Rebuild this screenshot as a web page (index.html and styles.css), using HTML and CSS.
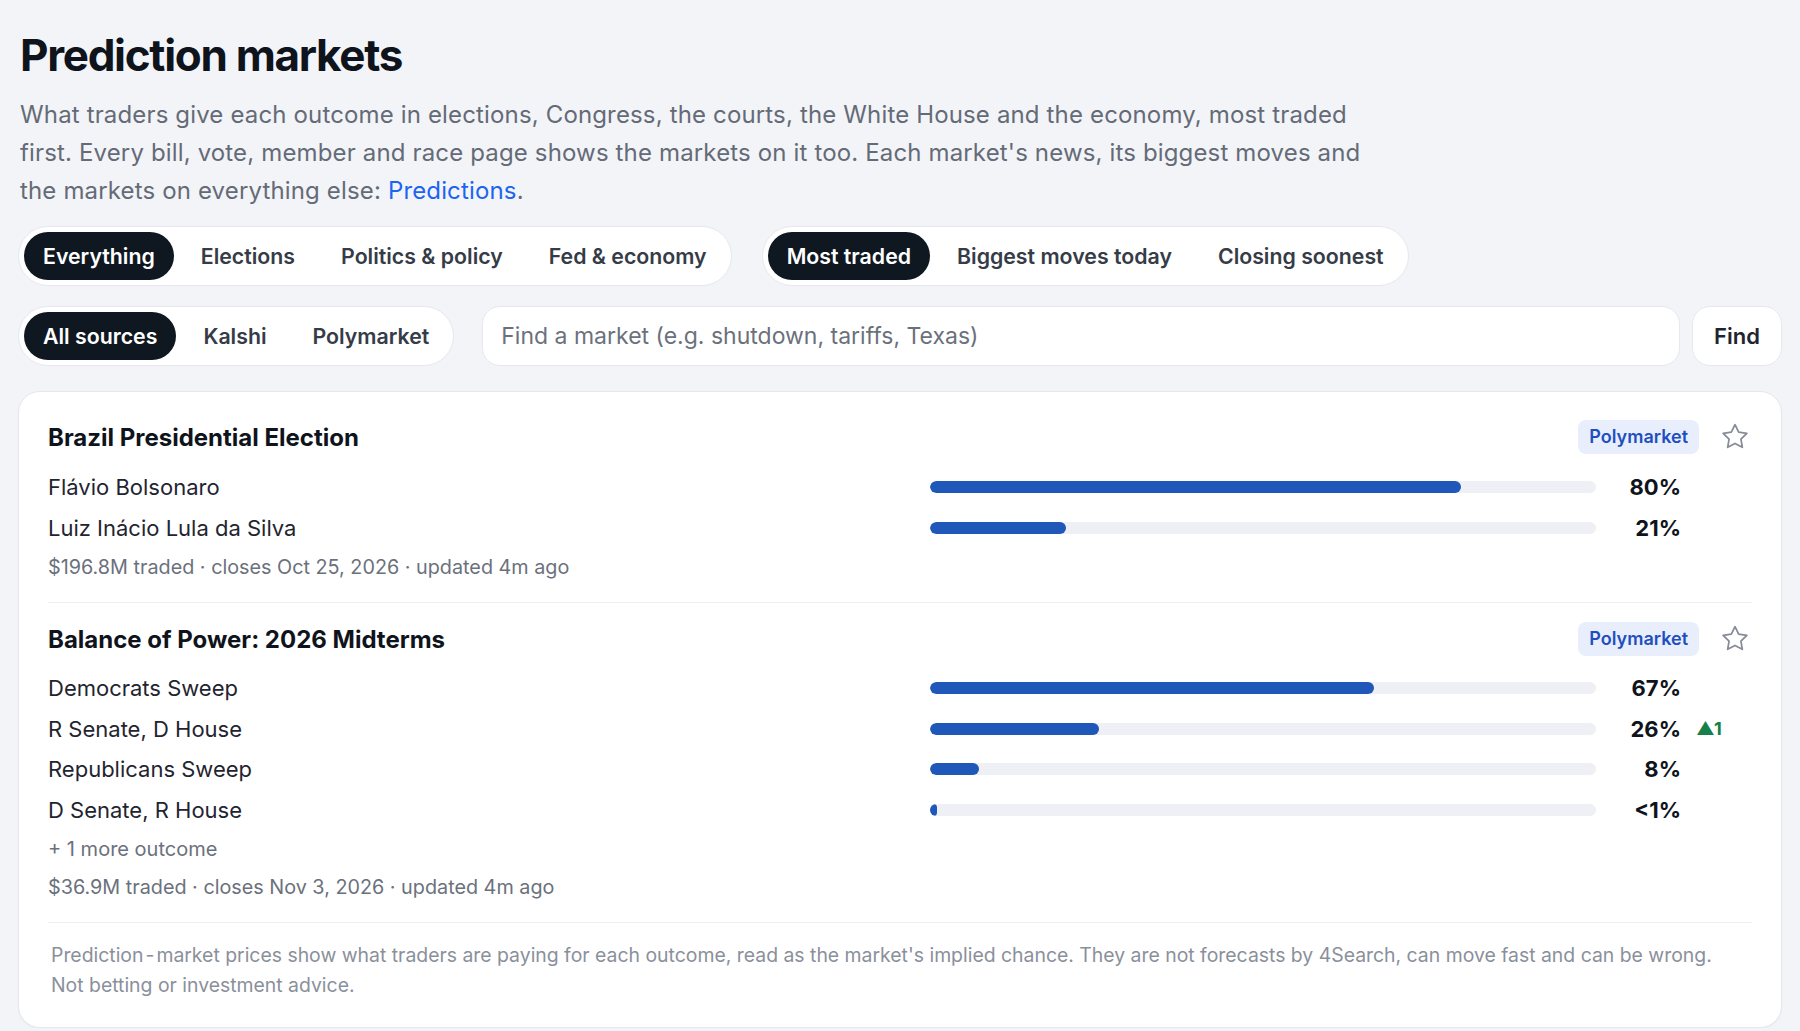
FILE: index.html
```html
<!DOCTYPE html>
<html lang="en">
<head>
<meta charset="utf-8">
<title>Prediction markets</title>
<link rel="stylesheet" href="styles.css">
</head>
<body>
<main class="page">
  <h1 class="title">Prediction markets</h1>
  <p class="intro">What traders give each outcome in elections, Congress, the courts, the White House and the economy, most traded first. Every bill, vote, member and race page shows the markets on it too. Each market's news, its biggest moves and the markets on everything else: <a href="#" class="link">Predictions</a>.</p>

  <div class="toolbar">
    <nav class="seg">
      <button class="pill is-active">Everything</button>
      <button class="pill">Elections</button>
      <button class="pill">Politics &amp; policy</button>
      <button class="pill">Fed &amp; economy</button>
    </nav>
    <nav class="seg">
      <button class="pill is-active">Most traded</button>
      <button class="pill">Biggest moves today</button>
      <button class="pill">Closing soonest</button>
    </nav>
  </div>

  <div class="toolbar">
    <nav class="seg">
      <button class="pill is-active">All sources</button>
      <button class="pill">Kalshi</button>
      <button class="pill">Polymarket</button>
    </nav>
    <form class="search">
      <input class="search-input" type="text" placeholder="Find a market (e.g. shutdown, tariffs, Texas)">
      <button class="search-btn" type="button">Find</button>
    </form>
  </div>

  <section class="card">
    <article class="market">
      <header class="market-head">
        <h2 class="market-title">Brazil Presidential Election</h2>
        <span class="badge">Polymarket</span>
        <button class="star" aria-label="Save">
          <svg width="32" height="32" viewBox="0 0 24 24" fill="none" stroke="currentColor" stroke-width="1.3" stroke-linejoin="round"><path d="M12 2.8l2.75 5.6 6.15.9-4.45 4.35 1.05 6.1L12 16.85l-5.5 2.9 1.05-6.1L3.1 9.3l6.15-.9z"/></svg>
        </button>
      </header>
      <div class="outcome">
        <span class="label">Flávio Bolsonaro</span>
        <span class="track"><span class="fill" style="width:79.7%"></span></span>
        <span class="pct">80%</span>
        <span class="delta"></span>
      </div>
      <div class="outcome">
        <span class="label">Luiz Inácio Lula da Silva</span>
        <span class="track"><span class="fill" style="width:20.4%"></span></span>
        <span class="pct">21%</span>
        <span class="delta"></span>
      </div>
      <p class="meta">$196.8M traded · closes Oct 25, 2026 · updated 4m ago</p>
    </article>

    <article class="market">
      <header class="market-head">
        <h2 class="market-title">Balance of Power: 2026 Midterms</h2>
        <span class="badge">Polymarket</span>
        <button class="star" aria-label="Save">
          <svg width="32" height="32" viewBox="0 0 24 24" fill="none" stroke="currentColor" stroke-width="1.3" stroke-linejoin="round"><path d="M12 2.8l2.75 5.6 6.15.9-4.45 4.35 1.05 6.1L12 16.85l-5.5 2.9 1.05-6.1L3.1 9.3l6.15-.9z"/></svg>
        </button>
      </header>
      <div class="outcome">
        <span class="label">Democrats Sweep</span>
        <span class="track"><span class="fill" style="width:66.6%"></span></span>
        <span class="pct">67%</span>
        <span class="delta"></span>
      </div>
      <div class="outcome">
        <span class="label">R Senate, D House</span>
        <span class="track"><span class="fill" style="width:25.4%"></span></span>
        <span class="pct">26%</span>
        <span class="delta up">▲1</span>
      </div>
      <div class="outcome">
        <span class="label">Republicans Sweep</span>
        <span class="track"><span class="fill" style="width:7.4%"></span></span>
        <span class="pct">8%</span>
        <span class="delta"></span>
      </div>
      <div class="outcome">
        <span class="label">D Senate, R House</span>
        <span class="track"><span class="fill" style="width:1%"></span></span>
        <span class="pct">&lt;1%</span>
        <span class="delta"></span>
      </div>
      <p class="more">+ 1 more outcome</p>
      <p class="meta meta-spaced">$36.9M traded · closes Nov 3, 2026 · updated 4m ago</p>
    </article>

    <p class="disclaimer">Prediction<span class="hy">&#8209;</span>market prices show what traders are paying for each outcome, read as the market's implied chance. They are not forecasts by 4Search, can move fast and can be wrong. Not betting or investment advice.</p>
  </section>
</main>
</body>
</html>
```

FILE: styles.css
```css
* {
  box-sizing: border-box;
}

html, body {
  margin: 0;
  padding: 0;
  background: #f3f4f8;
}

body {
  font-family: Inter, "Noto Sans", "Liberation Sans", sans-serif;
  color: #111827;
}

.page {
  padding: 29px 18px 0;
}

.title {
  margin: 0;
  font-size: 44px;
  line-height: 53px;
  font-weight: 700;
  letter-spacing: -1.3px;
  color: #0f141c;
  padding-left: 2px;
}

.intro {
  margin: 14px 0 0;
  max-width: 1368px;
  font-size: 24px;
  line-height: 38px;
  letter-spacing: 0.15px;
  color: #646b77;
  padding-left: 2px;
}

.link {
  color: #1d64f2;
  text-decoration: none;
}

/* filter rows */
.toolbar {
  display: flex;
  align-items: center;
  gap: 30px;
  margin-top: 16px;
}

.toolbar + .toolbar {
  margin-top: 20px;
}

.seg {
  display: flex;
  align-items: center;
  gap: 8px;
  height: 60px;
  padding: 0 5px;
  background: #ffffff;
  border: 1px solid #e6e8ee;
  border-radius: 30px;
}

.pill {
  height: 48px;
  padding: 0 19px;
  border: 0;
  border-radius: 24px;
  background: transparent;
  font-family: inherit;
  font-size: 21.3px;
  font-weight: 600;
  color: #363c47;
  cursor: pointer;
}

.pill.is-active {
  background: #0f1720;
  color: #ffffff;
}

.search {
  flex: 1;
  display: flex;
  gap: 12px;
  margin-left: -2px;
}

.search-input {
  flex: 1;
  height: 60px;
  padding: 0 18px;
  border: 1px solid #e6e8ee;
  border-radius: 18px;
  background: #ffffff;
  font-family: inherit;
  font-size: 23px;
  color: #111827;
  outline: none;
}

.search-input::placeholder {
  color: #6b717c;
}

.search-btn {
  width: 90px;
  height: 60px;
  border: 1px solid #e6e8ee;
  border-radius: 18px;
  background: #ffffff;
  font-family: inherit;
  font-size: 22px;
  font-weight: 600;
  color: #1f2530;
}

/* market card */
.card {
  margin-top: 25px;
  background: #ffffff;
  border: 1px solid #e6e8ee;
  border-radius: 22px;
  padding: 28px 29px 27px;
  box-shadow: 0 1px 2px rgba(16, 24, 40, 0.04);
}

.market {
  padding: 19px 0 21px;
  border-bottom: 1px solid #eceef2;
}

.market:first-child {
  padding-top: 0;
  padding-bottom: 21px;
}

.market-head {
  display: flex;
  align-items: center;
  height: 34px;
  margin-bottom: 13px;
}

.market + .market .market-head {
  margin-bottom: 12px;
}

.market-title {
  flex: 1;
  margin: 0;
  font-size: 24px;
  font-weight: 700;
  color: #0f141c;
}

.badge {
  height: 34px;
  line-height: 34px;
  padding: 0 11px;
  border-radius: 8px;
  background: #e8eefc;
  color: #1f4fbf;
  font-size: 18px;
  font-weight: 600;
}

.star {
  display: flex;
  align-items: center;
  justify-content: center;
  width: 32px;
  height: 32px;
  margin-left: 20px;
  margin-right: 1px;
  padding: 0;
  border: 0;
  background: transparent;
  color: #868b96;
}

.outcome {
  display: grid;
  grid-template-columns: 1fr 666px 85px 71px;
  align-items: center;
  height: 40.5px;
}

.label {
  font-size: 22px;
  color: #1f2530;
}

.track {
  display: block;
  height: 12px;
  border-radius: 6px;
  background: #eef0f5;
  overflow: hidden;
}

.fill {
  display: block;
  height: 100%;
  border-radius: 6px;
  background: #1f58b8;
}

.pct {
  text-align: right;
  font-size: 22px;
  font-weight: 700;
  color: #0f141c;
}

.delta {
  padding-left: 15px;
  font-size: 18px;
  font-weight: 700;
}

.delta.up {
  color: #17804a;
}

.more {
  margin: 5px 0 0;
  font-size: 20px;
  line-height: 28px;
  color: #6b717c;
}

.meta {
  margin: 5px 0 0;
  font-size: 19.8px;
  line-height: 28px;
  color: #6b717c;
}

.meta-spaced {
  margin-top: 10px;
}

.disclaimer {
  margin: 17px 0 0;
  padding: 0 20px 0 3px;
  font-size: 19.4px;
  line-height: 30px;
  color: #8a909b;
}

.hy {
  margin: 0 3px;
}
```
